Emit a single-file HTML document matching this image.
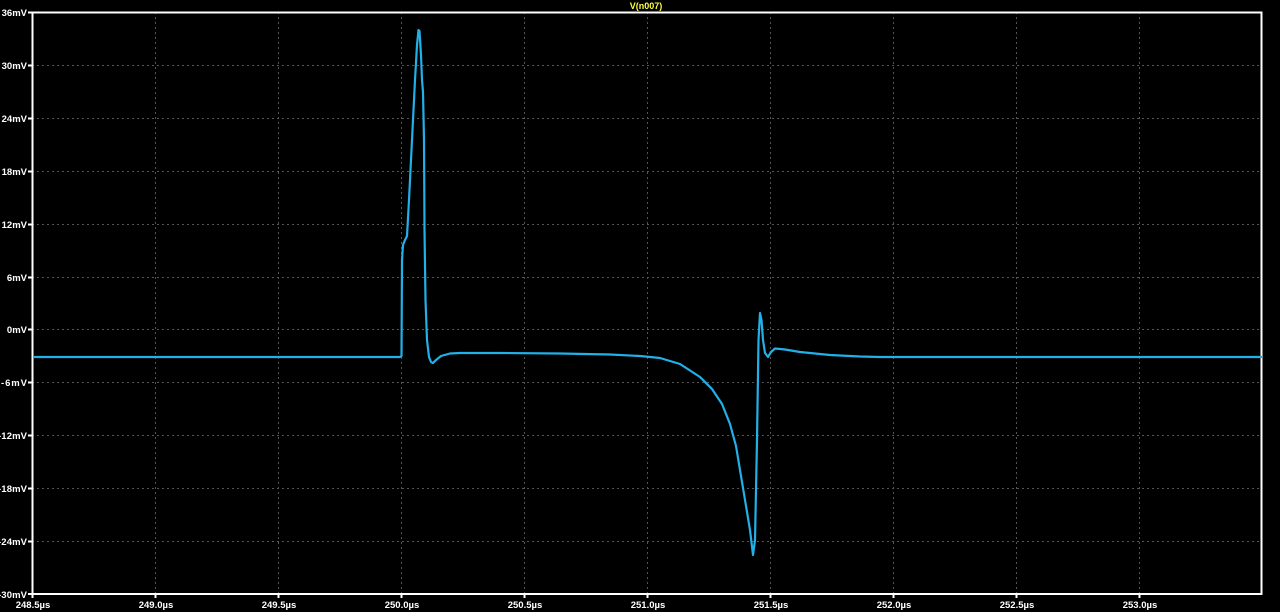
<!DOCTYPE html><html><head><style>body{margin:0;background:#000;}svg{display:block}text{font-family:"Liberation Sans",sans-serif;font-size:9.5px;fill:#fff;font-weight:bold}</style></head><body>
<svg width="1280" height="612" viewBox="0 0 1280 612">
<rect width="1280" height="612" fill="#000"/>
<g stroke="#555" stroke-width="1" stroke-dasharray="2,3">
<line x1="155.5" y1="12" x2="155.5" y2="594"/><line x1="278.5" y1="12" x2="278.5" y2="594"/><line x1="401.5" y1="12" x2="401.5" y2="594"/><line x1="524.5" y1="12" x2="524.5" y2="594"/><line x1="647.5" y1="12" x2="647.5" y2="594"/><line x1="770.5" y1="12" x2="770.5" y2="594"/><line x1="893.5" y1="12" x2="893.5" y2="594"/><line x1="1016.5" y1="12" x2="1016.5" y2="594"/><line x1="1139.5" y1="12" x2="1139.5" y2="594"/>
<line x1="32" y1="65.5" x2="1262" y2="65.5"/><line x1="32" y1="118.5" x2="1262" y2="118.5"/><line x1="32" y1="171.5" x2="1262" y2="171.5"/><line x1="32" y1="224.5" x2="1262" y2="224.5"/><line x1="32" y1="277.5" x2="1262" y2="277.5"/><line x1="32" y1="329.5" x2="1262" y2="329.5"/><line x1="32" y1="382.5" x2="1262" y2="382.5"/><line x1="32" y1="435.5" x2="1262" y2="435.5"/><line x1="32" y1="488.5" x2="1262" y2="488.5"/><line x1="32" y1="541.5" x2="1262" y2="541.5"/>
</g>
<rect x="32.5" y="12.5" width="1229" height="581.5" fill="none" stroke="#fff" stroke-width="2"/>
<g stroke="#fff" stroke-width="2">
<line x1="28" y1="12.5" x2="32" y2="12.5"/><line x1="28" y1="65.5" x2="32" y2="65.5"/><line x1="28" y1="118.5" x2="32" y2="118.5"/><line x1="28" y1="171.5" x2="32" y2="171.5"/><line x1="28" y1="224.5" x2="32" y2="224.5"/><line x1="28" y1="277.5" x2="32" y2="277.5"/><line x1="28" y1="329.5" x2="32" y2="329.5"/><line x1="28" y1="382.5" x2="32" y2="382.5"/><line x1="28" y1="435.5" x2="32" y2="435.5"/><line x1="28" y1="488.5" x2="32" y2="488.5"/><line x1="28" y1="541.5" x2="32" y2="541.5"/><line x1="28" y1="594" x2="32" y2="594"/>
<line x1="32.5" y1="594" x2="32.5" y2="598"/><line x1="155.5" y1="594" x2="155.5" y2="598"/><line x1="278.5" y1="594" x2="278.5" y2="598"/><line x1="401.5" y1="594" x2="401.5" y2="598"/><line x1="524.5" y1="594" x2="524.5" y2="598"/><line x1="647.5" y1="594" x2="647.5" y2="598"/><line x1="770.5" y1="594" x2="770.5" y2="598"/><line x1="893.5" y1="594" x2="893.5" y2="598"/><line x1="1016.5" y1="594" x2="1016.5" y2="598"/><line x1="1139.5" y1="594" x2="1139.5" y2="598"/>
</g>
<g text-anchor="end">
<text x="27" y="16">36mV</text><text x="27" y="69">30mV</text><text x="27" y="122">24mV</text><text x="27" y="175">18mV</text><text x="27" y="228">12mV</text><text x="27" y="281">6mV</text><text x="27" y="333">0mV</text><text x="27" y="386" textLength="26">-6mV</text><text x="27" y="439" textLength="29">-12mV</text><text x="27" y="492" textLength="29">-18mV</text><text x="27" y="545" textLength="29">-24mV</text><text x="27" y="598" textLength="29">-30mV</text>
</g>
<g text-anchor="middle">
<text x="33" y="608">248.5µs</text><text x="156" y="608">249.0µs</text><text x="279" y="608">249.5µs</text><text x="402" y="608">250.0µs</text><text x="525" y="608">250.5µs</text><text x="648" y="608">251.0µs</text><text x="771" y="608">251.5µs</text><text x="894" y="608">252.0µs</text><text x="1017" y="608">252.5µs</text><text x="1140" y="608">253.0µs</text>
</g>
<text x="646" y="9" text-anchor="middle" style="fill:#ffff40;font-size:9px">V(n007)</text>
<polyline fill="none" stroke="#22b0e8" stroke-width="2.2" stroke-linejoin="round" points="33,357 400,357 401.5,356 402,260 403,245 405,240 407,236 409,200 412,140 415,80 417,45 418.5,30 419.5,31 421,55 422,80 423,92 424,140 424.5,230 425.5,300 427,340 429,357 431,362 433,363 436,360 441,356 450,353.5 460,353 500,353 560,353.5 610,354.5 640,356 660,358 680,364 700,377 712,389 722,404 730,424 736,446 740,470 745,500 750,530 753,555 755,540 757,440 758.5,340 760,313 761.5,320 763,340 765,353 768,357 771,352 775,348.5 785,349.5 800,352 830,355 860,356.5 880,357 1262,357"/>
</svg>
</body></html>
